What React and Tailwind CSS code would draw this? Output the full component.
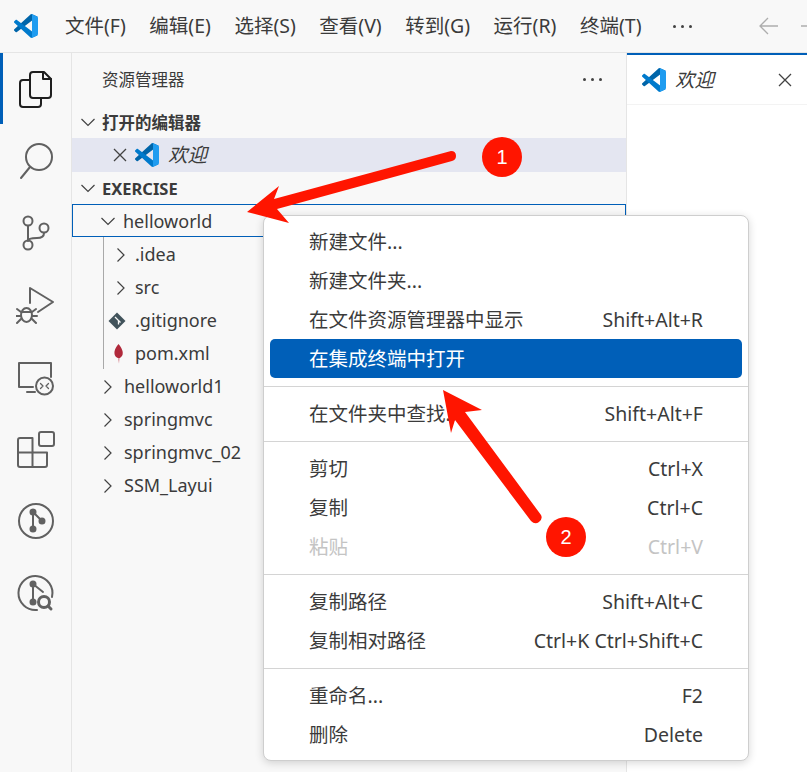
import React from "react";

const menus = ["文件(F)", "编辑(E)", "选择(S)", "查看(V)", "转到(G)", "运行(R)", "终端(T)"];

const VsLogo = ({ className }) => (
  <svg className={className} viewBox="0 0 100 100">
    <path fill="#0065A9" d="M96.4614 10.7962L75.8569 0.875542C73.4719 -0.272773 70.6217 0.211611 68.75 2.08333L1.29858 63.5832C-0.515693 65.2373 -0.513607 68.0937 1.30308 69.7452L6.81272 74.754C8.29793 76.1042 10.5347 76.2036 12.1338 74.9905L93.3609 13.3699C96.086 11.3026 100 13.2462 100 16.6667V16.4275C100 14.0265 98.6246 11.8378 96.4614 10.7962Z" />
    <path fill="#007ACC" d="M96.4614 89.2038L75.8569 99.1245C73.4719 100.273 70.6217 99.7884 68.75 97.9167L1.29858 36.4169C-0.515693 34.7627 -0.513607 31.9063 1.30308 30.2548L6.81272 25.246C8.29793 23.8958 10.5347 23.7964 12.1338 25.0095L93.3609 86.6301C96.086 88.6974 100 86.7538 100 83.3334V83.5726C100 85.9735 98.6246 88.1622 96.4614 89.2038Z" />
    <path fill="#1F9CF0" d="M75.8578 99.1263C73.4721 100.274 70.6219 99.7885 68.75 97.9166C71.0564 100.223 75 98.5895 75 95.3278V4.67213C75 1.41039 71.0564 -0.223106 68.75 2.08329C70.6219 0.211402 73.4721 -0.273666 75.8578 0.873633L96.4587 10.7807C98.6234 11.8217 100 14.0112 100 16.4132V83.5871C100 85.9891 98.6234 88.1786 96.4586 89.2196L75.8578 99.1263Z" />
  </svg>
);

const Chevron = ({ down }) => (
  <svg className="w-4 h-4 shrink-0" viewBox="0 0 16 16" fill="none" stroke="#424242" strokeWidth="1.2">
    {down ? <path d="M1.5 5l6.5 6.5L14.500 5" /> : <path d="M4.500 1.500L11 8l-6.500 6.500" />}
  </svg>
);

const Close = ({ className }) => (
  <svg className={className} viewBox="0 0 14 14" fill="none" stroke="#424242" strokeWidth="1.3">
    <path d="M1 1l12 12M13 1L1 13" />
  </svg>
);

const Dots = () => (
  <div className="flex gap-[5px]">
    <span className="w-[3px] h-[3px] rounded-full bg-[#424242]" />
    <span className="w-[3px] h-[3px] rounded-full bg-[#424242]" />
    <span className="w-[3px] h-[3px] rounded-full bg-[#424242]" />
  </div>
);

const activity = [
  <g stroke="#1f1f1f">
    <path d="M17 3h11l7 7v16a3 3 0 0 1-3 3H17a3 3 0 0 1-3-3V6a3 3 0 0 1 3-3z" />
    <path d="M27 3v7h8" />
    <path d="M14 11H7a3 3 0 0 0-3 3v21a3 3 0 0 0 3 3h15a3 3 0 0 0 3-3v-6" />
  </g>,
  <g>
    <circle cx="23" cy="16" r="13" />
    <path d="M14 26L5 37" />
  </g>,
  <g>
    <circle cx="12" cy="8" r="4.500" />
    <circle cx="12" cy="32" r="4.500" />
    <circle cx="28" cy="15" r="4.500" />
    <path d="M12 13v14M28 20c0 4-3 5-7 5-5 0-9 1-9 3" />
  </g>,
  <g>
    <path d="M14 18V3l23 14-15 10" />
    <ellipse cx="10.500" cy="30" rx="5.500" ry="7" />
    <path d="M5 27h11M1 24l4 3M20 24l-4 3M0 31h5M16 31h5M1 38l4-4M20 38l-4-4" />
  </g>,
  <g>
    <path d="M17 30H3V6h32v14" />
    <path d="M11 35h8" />
    <circle cx="28.500" cy="29" r="8.500" />
    <path d="M24.500 26.500l2.500 2.500-2.500 2.500M32.500 26.500l-2.500 2.500 2.500 2.500" strokeWidth="1.300" />
  </g>,
  <g>
    <path d="M4 9h12.500v14.500H31V36a2 2 0 0 1-2 2H4a2 2 0 0 1-2-2V11a2 2 0 0 1 2-2z" />
    <path d="M2 23.500h14.500V38" />
    <rect x="23" y="3" width="15" height="14" rx="2" />
  </g>,
  <g>
    <circle cx="20" cy="20" r="17" />
    <path d="M17 11v17M17 11l9 9" />
    <circle cx="17" cy="11" r="2.500" fill="#616161" />
    <circle cx="17" cy="28" r="2.500" fill="#616161" />
    <circle cx="26" cy="20" r="2.500" fill="#616161" />
  </g>,
  <g>
    <path d="M36 24a17 17 0 1 0-15 13" />
    <path d="M17 11v18M17 11l10 8" />
    <circle cx="17" cy="11" r="2.500" fill="#616161" />
    <circle cx="17" cy="29" r="2.500" fill="#616161" />
    <circle cx="28" cy="29" r="5.500" strokeWidth="3" />
    <path d="M32 33l3 3" strokeWidth="3" />
  </g>,
];

const Row = ({ children, className }) => (
  <div className={`h-[33px] pt-[2px] flex items-center text-[18px] ${className}`}>{children}</div>
);

const topFolders = ["helloworld1", "springmvc", "springmvc_02", "SSM_Layui"];

const menuGroups = [
  [
    { label: "新建文件..." },
    { label: "新建文件夹..." },
    { label: "在文件资源管理器中显示", keys: "Shift+Alt+R" },
    { label: "在集成终端中打开", active: true },
  ],
  [{ label: "在文件夹中查找...", keys: "Shift+Alt+F" }],
  [
    { label: "剪切", keys: "Ctrl+X" },
    { label: "复制", keys: "Ctrl+C" },
    { label: "粘贴", keys: "Ctrl+V", disabled: true },
  ],
  [
    { label: "复制路径", keys: "Shift+Alt+C" },
    { label: "复制相对路径", keys: "Ctrl+K Ctrl+Shift+C" },
  ],
  [
    { label: "重命名...", keys: "F2" },
    { label: "删除", keys: "Delete" },
  ],
];

const MenuItem = ({ item }) => {
  let color = "text-[#3b3b3b]";
  if (item.active) color = "text-white bg-[#005fb8] rounded-[5px]";
  if (item.disabled) color = "text-[#c4c4c4]";
  return (
    <div className={`h-[39px] mx-[6px] pl-[39px] pr-[39px] flex items-center justify-between text-[19.5px] ${color}`}>
      <span>{item.label}</span>
      {item.keys && <span>{item.keys}</span>}
    </div>
  );
};

export default function App() {
  return (
    <div className="relative w-[807px] h-[772px] overflow-hidden flex flex-col bg-white text-[#3b3b3b] font-['Noto_Sans','Noto_Sans_CJK_SC',sans-serif]">
      {/* title bar */}
      <div className="h-[53px] shrink-0 flex items-center bg-[#f8f8f8] border-b border-[#e5e5e5]">
        <VsLogo className="w-6 h-6 ml-[14px] mr-[27px] shrink-0" />
        <div className="flex gap-[23.5px] text-[19.5px] whitespace-nowrap">
          {menus.map((m) => (
            <span key={m}>{m}</span>
          ))}
        </div>
        <div className="ml-[32px]">
          <Dots />
        </div>
        <svg className="ml-[67px] w-5 h-5 shrink-0" viewBox="0 0 20 20" fill="none" stroke="#adadad" strokeWidth="1.300">
          <path d="M1 10h18M9 2l-8 8 8 8" />
        </svg>
        <svg className="ml-[21px] w-5 h-5 shrink-0" viewBox="0 0 20 20" fill="none" stroke="#adadad" strokeWidth="1.300">
          <path d="M1 10h18M11 2l8 8-8 8" />
        </svg>
      </div>

      <div className="flex-1 flex min-h-0">
        {/* activity bar */}
        <div className="relative w-[72px] shrink-0 bg-[#f8f8f8] border-r border-[#e5e5e5] flex flex-col">
          <span className="absolute left-0 top-0 w-[3px] h-[71px] bg-[#005fb8]" />
          {activity.map((icon, i) => (
            <div key={i} className="h-[72px] shrink-0 flex items-center justify-center">
              <svg className="w-10 h-10" viewBox="0 0 40 40" fill="none" stroke="#616161" strokeWidth="2" strokeLinecap="round" strokeLinejoin="round">
                {icon}
              </svg>
            </div>
          ))}
        </div>

        {/* explorer */}
        <div className="w-[555px] shrink-0 bg-[#f8f8f8] border-r border-[#e5e5e5] flex flex-col">
          <div className="h-[52px] flex items-center justify-between pl-[30px] pr-[24px] text-[16.5px]">
            <span className="pt-[2px]">资源管理器</span>
            <Dots />
          </div>
          <div className="h-[33px] flex items-center gap-[6px] pl-[8px] text-[16.5px] font-bold">
            <Chevron down />
            <span className="pt-[3px]">打开的编辑器</span>
          </div>
          <div className="h-[34px] flex items-center pl-[41px] bg-[#e4e6f1] text-[19.5px]">
            <Close className="w-[14px] h-[14px]" />
            <VsLogo className="w-6 h-6 ml-[8px] mr-[9px]" />
            <span className="italic">欢迎</span>
          </div>
          <div className="h-[32px] flex items-center gap-[6px] pl-[8px] text-[16.5px] font-bold">
            <Chevron down />
            <span className="pt-[2px]">EXERCISE</span>
          </div>
          <div className="h-[33px] pt-[1px] flex items-center gap-[7px] pl-[27px] border border-[#005fb8] text-[18px]">
            <Chevron down />
            <span>helloworld</span>
          </div>
          <div className="ml-[31px] border-l border-[#a9a9a9]">
            <Row className="pl-[9px] gap-[6px]">
              <Chevron />
              <span>.idea</span>
            </Row>
            <Row className="pl-[9px] gap-[6px]">
              <Chevron />
              <span>src</span>
            </Row>
            <Row className="pl-[4px] gap-[9px]">
              <svg className="w-[18px] h-[18px] shrink-0" viewBox="0 0 18 18">
                <path fill="#41535b" d="M9 0.500L17.500 9 9 17.500 0.500 9z" />
                <path stroke="#f8f8f8" strokeWidth="1.300" fill="none" d="M7 5l3.500 3.500v4M10.500 8.500l2 2" />
              </svg>
              <span>.gitignore</span>
            </Row>
            <Row className="pl-[8px] gap-[10px]">
              <svg className="w-[13px] h-[22px] shrink-0" viewBox="0 0 13 22">
                <path fill="#b0293b" d="M6.500 1C10 5 11.500 9 10.500 12c-.8 2-2.500 3-3.500 3.500-3-1-5-3-4.500-7C3 5 5 3 6.500 1z" />
                <path fill="#d98a94" d="M6 15.500l1 5 .5-5z" />
              </svg>
              <span>pom.xml</span>
            </Row>
          </div>
          {topFolders.map((f) => (
            <Row key={f} className="pl-[28px] gap-[8px]">
              <Chevron />
              <span>{f}</span>
            </Row>
          ))}
        </div>

        {/* editor */}
        <div className="flex-1 bg-white">
          <div className="h-[52px] flex items-center pl-[15px] pr-[15px] border-t-2 border-t-[#005fb8] border-b border-b-[#f3f3f3] text-[19.5px]">
            <VsLogo className="w-6 h-6 mr-[9px]" />
            <span className="italic">欢迎</span>
            <Close className="w-[14px] h-[14px] ml-auto" />
          </div>
        </div>
      </div>

      {/* context menu */}
      <div className="absolute left-[263px] top-[215px] w-[486px] h-[546px] pt-[6px] bg-white border border-[#cecece] rounded-[8px] shadow-[0_2px_8px_rgba(0,0,0,0.16)]">
        {menuGroups.map((group, i) => (
          <div key={i}>
            {i > 0 && (
              <div className="h-[16px] flex items-center">
                <div className="w-full h-px bg-[#d4d4d4]" />
              </div>
            )}
            {group.map((item) => (
              <MenuItem key={item.label} item={item} />
            ))}
          </div>
        ))}
      </div>

      {/* annotation arrows */}
      <svg className="absolute inset-0 pointer-events-none" width="807" height="772" viewBox="0 0 807 772">
        <path fill="#ff1500" d="M247 212L279 186L274 199L451 151Q456 151 456 156Q456 160 452 161L277 209L289 223Z" />
        <path fill="#ff1500" d="M443 390L482 410L465 412L541 515Q543 519 539 522Q535 525 531 521L455 420L451 433Z" />
      </svg>
      <div className="absolute left-[482px] top-[137px] w-10 h-10 rounded-full bg-[#ff1500] text-white flex items-center justify-center text-[20px] font-['Liberation_Sans',sans-serif]">
        1
      </div>
      <div className="absolute left-[546px] top-[517px] w-10 h-10 rounded-full bg-[#ff1500] text-white flex items-center justify-center text-[20px] font-['Liberation_Sans',sans-serif]">
        2
      </div>
    </div>
  );
}
